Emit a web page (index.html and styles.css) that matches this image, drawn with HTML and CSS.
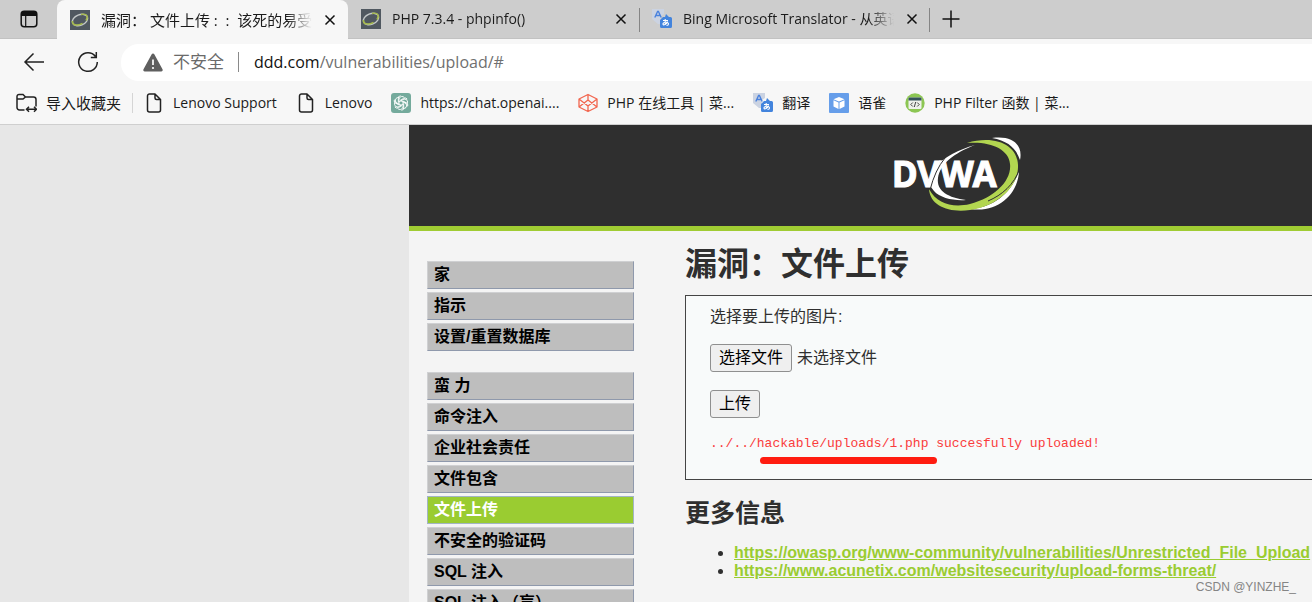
FILE: index.html
```html
<!DOCTYPE html>
<html lang="zh-CN">
<head>
<meta charset="utf-8">
<meta name="viewport" content="width=device-width, initial-scale=1">
<title>漏洞：文件上传</title>
<link rel="stylesheet" href="styles.css">
</head>
<body>
<svg class="defs" width="0" height="0" aria-hidden="true">
  <symbol id="ring" viewBox="0 0 20 20">
    <rect width="20" height="20" fill="#505860"/>
    <ellipse cx="10" cy="10" rx="8" ry="5.2" transform="rotate(-22 10 10)" fill="none" stroke="#c4c9c9" stroke-width="1.4"/>
    <path d="M2.500 11c-.5 5 5.500 5 10 2.300M11 4.500c6-1.500 7.500 2 5 6" fill="none" stroke="#a5b94a" stroke-width="1.500"/>
  </symbol>
  <symbol id="close" viewBox="0 0 12 12"><path d="M1.500 1.500l9 9M10.500 1.500l-9 9" stroke="#111" stroke-width="1.500"/></symbol>
  <symbol id="page" viewBox="0 0 20 20"><path d="M5.500 1h5.500l5.500 5.500V17a2 2 0 0 1-2 2h-9a2 2 0 0 1-2-2V3a2 2 0 0 1 2-2zM11 1v4a1.500 1.500 0 0 0 1.500 1.500h4" fill="none" stroke="#222" stroke-width="1.500" stroke-linejoin="round"/></symbol>
  <symbol id="translate" viewBox="0 0 20 20">
    <path d="M0 0h12v5l-3 2v8H6l-6-5z" fill="#cbd3e2"/>
    <path d="M2.800 8.500L5.600 2.500h.8l2.800 6M4 6.500h4" fill="none" stroke="#4a82dd" stroke-width="1.400"/>
    <path d="M8 11l3-3h2l1-3 3 3h1.500A1.500 1.500 0 0 1 20 9.500v8a1.500 1.500 0 0 1-1.500 1.500h-9A1.500 1.500 0 0 1 8 17.500z" fill="#4384dd"/>
    <path d="M11 11.500h5M13.200 10v6M15.500 12.500c-1 3-4.500 4.500-4.500 2.500 0-2 5.500-2.500 5.500 0 0 1-1 1.500-2 1.500" fill="none" stroke="#fff" stroke-width="1.100"/>
  </symbol>
</svg>

<header class="browser">
  <div class="tab-strip">
    <button class="tab-menu" type="button" aria-label="标签页操作">
      <svg width="18" height="18" viewBox="0 0 18 18"><rect x="1.200" y="1.200" width="15.600" height="15.600" rx="3" fill="none" stroke="#111" stroke-width="1.500"/><path d="M1 6V4a3 3 0 0 1 3-3h10a3 3 0 0 1 3 3v2z" fill="#111"/><path d="M5.700 6v11" stroke="#111" stroke-width="1.200"/></svg>
    </button>
    <div class="tab tab-active">
      <svg class="icon"><use href="#ring"/></svg>
      <span class="tab-title">漏洞： 文件上传 :&nbsp; :&nbsp; 该死的易受</span>
      <button class="tab-close" type="button" aria-label="关闭"><svg width="12" height="12"><use href="#close"/></svg></button>
    </div>
    <div class="tab">
      <svg class="icon"><use href="#ring"/></svg>
      <span class="tab-title">PHP 7.3.4 - phpinfo()</span>
      <button class="tab-close" type="button" aria-label="关闭"><svg width="12" height="12"><use href="#close"/></svg></button>
    </div>
    <div class="tab tab-divided">
      <svg class="icon"><use href="#translate"/></svg>
      <span class="tab-title">Bing Microsoft Translator - 从英语</span>
      <button class="tab-close" type="button" aria-label="关闭"><svg width="12" height="12"><use href="#close"/></svg></button>
    </div>
    <button class="tab-new" type="button" aria-label="新建标签页"><svg width="18" height="18" viewBox="0 0 18 18"><path d="M9 .5v17M.5 9h17" stroke="#111" stroke-width="1.500"/></svg></button>
  </div>

  <div class="toolbar">
    <button class="tool" type="button" aria-label="返回"><svg width="22" height="20" viewBox="0 0 22 20"><path d="M21 10H2M10.500 1.500L2 10l8.500 8.500" fill="none" stroke="#222" stroke-width="1.500"/></svg></button>
    <button class="tool" type="button" aria-label="刷新"><svg width="22" height="22" viewBox="0 0 22 22"><path d="M18.500 5.500A9.300 9.300 0 1 0 20.300 11M19.300 1v5.500h-5.500" fill="none" stroke="#222" stroke-width="1.500"/></svg></button>
    <div class="address">
      <svg width="20" height="19" viewBox="0 0 20 19"><path d="M8.700 1.200a1.500 1.500 0 0 1 2.600 0l8.200 15a1.500 1.500 0 0 1-1.300 2.300H1.800a1.500 1.500 0 0 1-1.300-2.300z" fill="#5f5f5f"/><path d="M10 6.500v5.500" stroke="#fff" stroke-width="1.700"/><circle cx="10" cy="15" r="1.100" fill="#fff"/></svg>
      <span class="insecure">不安全</span>
      <span class="url">ddd.com<span class="url-path">/vulnerabilities/upload/#</span></span>
    </div>
  </div>

  <nav class="bookmarks">
    <a class="bookmark bookmark-import" href="#"><svg class="icon-wide" viewBox="0 0 21 20"><path d="M8.500 17H3.500a2.500 2.500 0 0 1-2.500-2.500v-11A2 2 0 0 1 3 1.500h4l2.500 2.500h8A2.500 2.500 0 0 1 20 6.500v7M1 6h6l2.500-2M11 16.300h9M13 13.800l-2.500 2.500 2.500 2.500M18 13.800l2.500 2.500-2.500 2.500" fill="none" stroke="#222" stroke-width="1.500"/></svg>导入收藏夹</a>
    <a class="bookmark" href="#"><svg class="icon"><use href="#page"/></svg>Lenovo Support</a>
    <a class="bookmark" href="#"><svg class="icon"><use href="#page"/></svg>Lenovo</a>
    <a class="bookmark" href="#"><svg class="icon" viewBox="0 0 20 20"><rect width="20" height="20" rx="3" fill="#74aa9c"/><g fill="none" stroke="#fff" stroke-width="0.900"><path id="petal" d="M8 11V6.200a3 3 0 0 1 5.500-1.400M9 7.500l3.700-2.200a2.800 2.800 0 0 1 3.500.7"/><use href="#petal" transform="rotate(60 10 10)"/><use href="#petal" transform="rotate(120 10 10)"/><use href="#petal" transform="rotate(180 10 10)"/><use href="#petal" transform="rotate(240 10 10)"/><use href="#petal" transform="rotate(300 10 10)"/></g></svg>https://chat.openai....</a>
    <a class="bookmark" href="#"><svg class="icon" viewBox="0 0 20 20"><path d="M10 1.500l9 4.500v8l-9 4.500L1 14V6zM10 1.500V7l9 7M10 7l-9 7M1 6l9 7 9-7M10 13v5.500" fill="none" stroke="#f2664f" stroke-width="1.300" stroke-linejoin="round"/></svg>PHP 在线工具 | 菜...</a>
    <a class="bookmark" href="#"><svg class="icon"><use href="#translate"/></svg>翻译</a>
    <a class="bookmark" href="#"><svg class="icon" viewBox="0 0 20 20"><rect width="20" height="20" rx="1" fill="#669eea"/><path d="M10 4l5.500 2.200L10 8.500 4.500 6.200zM4.500 7.300l5 2.100V16l-5-2.500zM15.500 7.300l-5 2.100V16l5-2.500z" fill="#fff"/></svg>语雀</a>
    <a class="bookmark" href="#"><svg class="icon" viewBox="0 0 20 20"><circle cx="10" cy="10" r="9.700" fill="#8cc653"/><rect x="3.500" y="4.500" width="13" height="11.500" rx="1" fill="#eef1ec"/><path d="M3.500 7.500v-2a1 1 0 0 1 1-1h11a1 1 0 0 1 1 1v2z" fill="#35535a"/><path d="M7.800 9.500L5.800 11.500l2 2M12.200 9.500l2 2-2 2M10.700 9l-1.400 5" fill="none" stroke="#444" stroke-width="1"/></svg>PHP Filter 函数 | 菜...</a>
  </nav>
</header>

<div class="site">
  <div class="banner">
    <svg class="logo" width="130" height="76" viewBox="0 0 130 76" role="img" aria-label="DVWA">
      <path d="M83 9C50 18 28 39 42 55c6 7 20 10 32 9-17-2-30-9-28-22C48 28 62 17 83 9z" fill="#fff"/>
      <path d="M100 2c22-3 31 8 28 22C124 12 116 5 100 2z" fill="#fff"/>
      <path d="M127 35c-1 24-22 42-48 38 22-2 40-15 48-38z" fill="#fff"/>
      <path d="M75 7c27-8 50 1 51 22 1 21-20 41-48 45-21 3-40-4-41-21 8 15 24 19 41 15 24-6 42-23 40-40-1-15-20-23-43-21z" fill="#b2d650"/>
      <path d="M128 32c-6 17-18 27-32 33" fill="none" stroke="#2f2f2f" stroke-width="1"/>
      <text class="logo-text" x="0" y="51">DVWA</text>
      <path d="M38 54Q43 34 53 22" fill="none" stroke="#2f2f2f" stroke-width="1"/>
    </svg>
  </div>
  <div class="columns">
    <nav class="menu">
      <ul class="menu-list">
        <li><a href="#">家</a></li>
        <li><a href="#">指示</a></li>
        <li><a href="#">设置/重置数据库</a></li>
      </ul>
      <ul class="menu-list">
        <li><a href="#">蛮 力</a></li>
        <li><a href="#">命令注入</a></li>
        <li><a href="#">企业社会责任</a></li>
        <li><a href="#">文件包含</a></li>
        <li><a class="selected" href="#">文件上传</a></li>
        <li><a href="#">不安全的验证码</a></li>
        <li><a href="#">SQL 注入</a></li>
        <li><a href="#">SQL 注入（盲）</a></li>
      </ul>
    </nav>
    <main class="content">
      <h1>漏洞：文件上传</h1>
      <form class="panel">
        <p>选择要上传的图片:</p>
        <div class="file-row">
          <input class="file-input" type="file" id="upload">
          <label class="btn" for="upload">选择文件</label>
          <span>未选择文件</span>
        </div>
        <button class="btn" type="button">上传</button>
        <pre class="result">../../<span class="marked">hackable/uploads/1.php</span> succesfully uploaded!</pre>
      </form>
      <h2>更多信息</h2>
      <ul class="links">
        <li><a href="#">https://owasp.org/www-community/vulnerabilities/Unrestricted_File_Upload</a></li>
        <li><a href="#">https://www.acunetix.com/websitesecurity/upload-forms-threat/</a></li>
      </ul>
    </main>
  </div>
</div>
<div class="watermark">CSDN @YINZHE_</div>
</body>
</html>
```
FILE: styles.css
```css
* { box-sizing: border-box; }

body {
  margin: 0;
  height: 100vh;
  display: flex;
  flex-direction: column;
  overflow: hidden;
  position: relative;
  background: #e7e7e7;
  color: #2f2f2f;
  font: 16px/18px "Liberation Sans", "Noto Sans CJK SC", sans-serif;
}

.defs { position: absolute; }

button {
  font: inherit;
  color: inherit;
}

.icon, .icon-wide {
  width: 20px;
  height: 20px;
  flex: none;
}

.icon-wide { width: 21px; }

/* Browser frame */
.browser {
  flex: none;
  background: #f7f7f7;
  border-bottom: 1px solid #cfcfcf;
  color: #1b1b1b;
  font: 14px/20px "Open Sans", "Noto Sans CJK SC", sans-serif;
}

.tab-strip {
  display: flex;
  height: 39px;
  background: #cdcdcd;
  border-bottom: 1px solid #c2c2c2;
}

.tab-menu, .tab-new, .tab-close, .tool {
  display: flex;
  align-items: center;
  justify-content: center;
  padding: 0;
  border: 0;
  background: none;
}

.tab-menu { width: 57px; }
.tab-new { width: 42px; }

.tab {
  display: flex;
  align-items: center;
  width: 291px;
  padding: 0 12px 0 13px;
  position: relative;
}

.tab-active {
  height: 39px;
  background: #f7f7f7;
  border-radius: 8px 8px 0 0;
}

.tab-active .tab-title { font-size: 15px; }

.tab-title {
  flex: 1;
  min-width: 0;
  margin-left: 11px;
  overflow: hidden;
  white-space: nowrap;
  mask-image: linear-gradient(to right, #000 88%, transparent);
}

.tab-close {
  width: 12px;
  height: 20px;
  margin-left: 12px;
}

.tab-divided::before, .tab-divided::after {
  content: "";
  position: absolute;
  top: 8px;
  bottom: 6px;
  left: 0;
  width: 1px;
  background: #858585;
}

.tab-divided::after {
  left: auto;
  right: 0;
}

.toolbar {
  display: flex;
  align-items: center;
  height: 46px;
  padding-left: 7px;
}

.tool {
  width: 54px;
  height: 36px;
}

.address {
  flex: 1;
  display: flex;
  align-items: center;
  height: 37px;
  margin-left: 6px;
  padding-left: 22px;
  border-radius: 18px 0 0 18px;
  background: #fff;
  font-size: 16px;
  line-height: 24px;
}

.insecure {
  margin-left: 10px;
  padding-right: 14px;
  color: #6a6a6a;
  font-size: 17px;
  line-height: 20px;
  border-right: 1px solid #8a8a8a;
}

.url { margin-left: 15px; color: #111; }
.url-path { color: #707070; }

.bookmarks {
  display: flex;
  align-items: center;
  height: 39px;
  padding: 0 16px 4px;
  gap: 19px;
}

.bookmark {
  display: flex;
  align-items: center;
  gap: 9px;
  color: #1b1b1b;
  text-decoration: none;
  white-space: nowrap;
}

.bookmark-import {
  padding-right: 11px;
  margin-right: -8px;
  border-right: 1px solid #d5d5d5;
  font-size: 15px;
}

/* Site */
.site {
  flex: 1;
  min-height: 0;
  margin-left: 409px;
  background: #f4f4f4;
}

.banner {
  display: flex;
  padding: 11px 0 14px 483px;
  background: #2f2f2f;
  border-bottom: 5px solid #a0cc33;
}

.logo { flex: none; }

.logo-text {
  fill: #fff;
  stroke: #fff;
  stroke-width: 1px;
  font: bold 35px "Noto Sans", sans-serif;
}

.columns {
  display: flex;
  align-items: flex-start;
}

.menu {
  flex: none;
  width: 207px;
  margin: 30px 51px 0 18px;
}

.menu-list {
  display: flex;
  flex-direction: column;
  gap: 3px;
  margin: 0 0 21px;
  padding: 0;
  list-style: none;
}

.menu-list a {
  display: block;
  padding-left: 6px;
  border: 1px solid;
  border-color: #cfd0d2 #8f99ac #8f99ac #cfd0d2;
  background: #bebebe;
  color: #000;
  font-weight: bold;
  line-height: 26px;
  text-decoration: none;
}

.menu-list .selected {
  background: #9acc31;
  border-color: #a2b5c4;
  color: #fff;
}

.content {
  flex: 1;
  min-width: 0;
}

h1, h2 {
  margin: 0;
  white-space: nowrap;
}

h1 {
  font-size: 32px;
  line-height: 48px;
  padding: 9px 0 7px;
}

h2 {
  font-size: 25px;
  line-height: 36px;
  margin-top: 15px;
}

.panel {
  padding: 10px 24px 26px;
  background: #f8fafa;
  border: 1px solid #444;
  border-right: 0;
}

.panel p {
  margin: 0 0 16px;
  line-height: 22px;
}

.file-row {
  display: flex;
  align-items: center;
  gap: 5px;
  margin-bottom: 18px;
}

.file-input {
  position: absolute;
  width: 1px;
  height: 1px;
  opacity: 0;
}

.btn {
  display: inline-block;
  padding: 0 8px;
  border: 1px solid #8f8f8f;
  border-radius: 3px;
  background: #efefef;
  color: #000;
  line-height: 26px;
}

.result {
  margin: 17px 0 0;
  color: #fa3c3c;
  font: 13px/18px "Liberation Mono", monospace;
}

.marked { position: relative; }

.marked::after {
  content: "";
  position: absolute;
  left: 3px;
  right: -9px;
  bottom: -13px;
  height: 7px;
  border-radius: 4px;
  background: #ff1c10;
}

.links {
  margin: 13px 0 0;
  padding-left: 49px;
}

.links a {
  color: #9acc31;
  font-weight: bold;
  white-space: nowrap;
}

.watermark {
  position: absolute;
  right: 16px;
  bottom: 7px;
  color: #858585;
  font-size: 12px;
  line-height: 16px;
}
```
